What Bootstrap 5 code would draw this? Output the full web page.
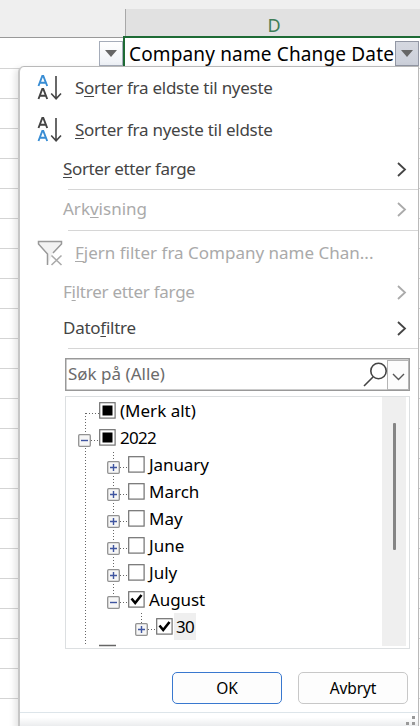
<!DOCTYPE html>
<html lang="no">
<head>
<meta charset="utf-8">
<meta name="viewport" content="width=device-width, initial-scale=1">
<title>Filter</title>
<link href="https://cdn.jsdelivr.net/npm/bootstrap@5.3.0/dist/css/bootstrap.min.css" rel="stylesheet">
<style>
body{width:420px;height:726px;font-family:"Noto Sans","Open Sans",sans-serif;font-size:17px;line-height:1;color:#444;background:#fff}
svg{display:block;flex:none}
.col-strip{height:37px;background:#efefef}
.col-d{width:295px;height:28px;margin-left:125px;padding-left:2px;padding-top:3px;background:#e1e1e1;border-left:1px solid #a8a8a8;color:#3f7d58;font-size:18px}
.title-row{height:31px}
.cell-c{width:123px;border-top:1px solid #999;padding-top:3px}
.cell-d{border:solid #1e6b35;border-width:2px 0 0 2px;margin-top:-1px;padding-left:4px;font-size:19px;color:#000}
.heading-text{letter-spacing:.15px;padding-top:7px}
.drop{width:24px;height:25px;border:1px solid #a5acb9;background:linear-gradient(#fff,#eef1f6)}
.drop-on{background:linear-gradient(#d5d8e0,#ccd0da);border-color:#9297a4;margin-top:3px;margin-right:1px}
.grid-rows{background:repeating-linear-gradient(#d4d4d4 0 1px,#fff 1px 30px)}
.filter-menu{left:18px;top:66px;width:401px;height:680px;background:#fff;border:1px solid #b9b9b9;border-left:2px solid #c6c6c6;border-radius:6px 0 0 0;box-shadow:-3px 2px 6px #0000001c}
.entry{padding-right:11px}
.entry>span,.find>span{padding-bottom:2px}
.h42{height:42px}.h37{height:38px}.h39{height:40px}.h36{height:37px}
.up{padding-bottom:2px}.down{padding-top:2px}
.ico{padding-left:17px}.ico svg{margin-right:12px}
.noico{padding-left:43px}
.off{color:#aaa}
.sep{height:1px;background:#d6d6d6;margin-left:48px}
u{text-underline-offset:2px;text-decoration-thickness:1px}
.find{width:345px;height:33px;margin:9px 0 0 45px;border:1px solid #999;box-shadow:inset 0 0 0 .5px #999;padding-left:2px;color:#6b6b6b}
.find-arrow{width:22px;height:30px;border:1px solid #b5b5b5;background:#fcfcfc;padding:12px 0 0 4px}
.tree{width:345px;height:253px;margin:5px 0 0 45px;border:1px solid #dcdfe1;color:#000;overflow:hidden}
.node{height:27px}
.lv0{padding-left:33px}.lv1{padding-left:12px}.lv2{padding-left:41px}.lv3{padding-left:69px}
.exp{margin-top:5px;margin-right:8px}
.name{margin-left:4px}
.picked{background:#efefef;padding:5px 2px;margin-left:1px}
.wires{left:0;top:0}
.track{right:3px;top:0;width:24px;height:249px;background:#efefef}
.thumb{width:3px;height:127px;margin:26px 0 0 11px;background:#858585;border-radius:1px}
.act{width:110px;height:32px;border-radius:5px;border:1px solid #c8c8c8;background:#fdfdfd;color:#000;font-size:15.5px;line-height:1;padding:2px 0 0}
.act-ok{border:1.5px solid #3978cf;margin-right:16px;letter-spacing:-.2px}
.act-no{letter-spacing:-.15px}
.acts{padding-left:152px;margin-top:23px}
.foot{height:16px;margin-top:8px;border-top:1px solid #dde5ea;background:linear-gradient(#fff 30%,#e6e8ea)}
.t1{letter-spacing:-.1px}.t2{letter-spacing:-.26px}.t3{letter-spacing:-.36px}.t7{letter-spacing:-.7px}
</style>
<script src="https://cdn.jsdelivr.net/npm/bootstrap@5.3.0/dist/js/bootstrap.bundle.min.js"></script>
</head>
<body class="position-relative overflow-hidden d-flex flex-column m-0">
<svg width="0" height="0" class="position-absolute"><defs>
<g id="plus"><rect x=".7" y=".7" width="11.6" height="11.6" rx="1" fill="#f6f6f6" stroke="#929292" stroke-width="1.3"/><path d="M3 6.5h7M6.5 3v7" stroke="#3f55a0" stroke-width="1.4"/></g>
<g id="minus"><rect x=".7" y=".7" width="11.6" height="11.6" rx="1" fill="#f6f6f6" stroke="#929292" stroke-width="1.3"/><path d="M3 6.5h7" stroke="#3f55a0" stroke-width="1.4"/></g>
<g id="box"><rect x=".7" y=".7" width="15.4" height="15.4" fill="#fff" stroke="#707070" stroke-width="1.2"/></g>
<g id="chev"><path d="M2 2 9 8.500l-7 6.500" fill="none" stroke="currentColor" stroke-width="1.8"/></g>
<path id="arr" d="M19 1v23M14.200 18.500l4.900 5.300 4.900-5.300" fill="none" stroke="#444" stroke-width="1.600"/>
<path id="ltr" d="M1.500 11 5.300 1h1L10.200 11M2.800 7.700h6.200" fill="none" stroke-width="1.900"/>
</defs></svg>
<div class="col-strip d-flex align-items-end flex-shrink-0"><div class="col-d d-flex align-items-center justify-content-center">D</div></div>
<div class="title-row d-flex flex-shrink-0">
 <div class="cell-c d-flex justify-content-end"><div class="drop d-flex align-items-center justify-content-center"><svg width="12" height="7"><path d="M0 0h12L6 7z" fill="#666"/></svg></div></div>
 <div class="cell-d d-flex flex-fill justify-content-between"><span class="heading-text text-nowrap">Company name Change Date</span><div class="drop drop-on d-flex flex-shrink-0 align-items-center justify-content-center"><svg width="12" height="7"><path d="M0 0h12L6 7z" fill="#666"/></svg></div></div>
</div>
<div class="grid-rows flex-fill"></div>
<div class="filter-menu position-absolute">
 <div class="entry ico h42 d-flex align-items-center"><svg width="26" height="26"><use href="#ltr" stroke="#398dd4"/><use href="#ltr" y="13" stroke="#444"/><use href="#arr"/></svg><span class="t2">S<u>o</u>rter fra eldste til nyeste</span></div>
 <div class="entry ico h42 d-flex align-items-center"><svg width="26" height="26"><use href="#ltr" stroke="#444"/><use href="#ltr" y="13" stroke="#398dd4"/><use href="#arr"/></svg><span class="t2"><u>S</u>orter fra nyeste til eldste</span></div>
 <div class="entry noico h37 up d-flex align-items-center justify-content-between"><span class="t3"><u>S</u>orter etter farge</span><svg width="11" height="17"><use href="#chev"/></svg></div>
 <div class="sep"></div>
 <div class="entry noico h39 up off d-flex align-items-center justify-content-between"><span>Ark<u>v</u>isning</span><svg width="11" height="17"><use href="#chev"/></svg></div>
 <div class="sep"></div>
 <div class="entry ico h42 down off d-flex align-items-center"><svg width="26" height="26" fill="none"><path d="M10.500 25V14L1.500 4V1.500h23V4L16 13" fill="#f2f2f2" stroke="#999" stroke-width="1.500"/><path d="m14.500 15.500 10 9.500m0-9.500-10 9.500" stroke="#aaa" stroke-width="1.600"/></svg><span><u>F</u>jern filter fra Company name Chan...</span></div>
 <div class="entry noico h37 off d-flex align-items-center justify-content-between"><span class="t2">F<u>i</u>ltrer etter farge</span><svg width="11" height="17"><use href="#chev"/></svg></div>
 <div class="entry noico h36 up d-flex align-items-center justify-content-between"><span class="t2">Dato<u>f</u>iltre</span><svg width="11" height="17"><use href="#chev"/></svg></div>
 <div class="sep"></div>
 <div class="find d-flex align-items-center"><span class="me-auto">Søk på (Alle)</span><svg width="24" height="26" fill="none" stroke="#444" stroke-width="1.600"><circle cx="15.500" cy="9" r="7.700"/><path d="M10 15 1 24"/></svg><div class="find-arrow"><svg width="13" height="8"><path d="m1 1 5.500 5.500L12 1" fill="none" stroke="#555" stroke-width="1.400"/></svg></div></div>
 <div class="tree position-relative">
  <svg class="wires position-absolute" width="340" height="251" fill="none" stroke="#666" stroke-width="1" stroke-dasharray="1 2"><path d="M20 16.500h13M19.500 16v20M19.500 51v198M25 43.500h9M47.500 55v150M54 70.500h9M54 97.500h9M54 124.500h9M54 151.500h9M54 178.500h9M54 205.500h9M75.500 216v10M82 232.500h9"/><path d="M33 248.500h17" stroke-dasharray="none" stroke-width="1.500"/></svg>
  <div class="position-relative">
  <div class="node lv0 d-flex align-items-center"><svg width="17" height="17"><use href="#box"/><path d="M3.500 3.500h10v10h-10z"/></svg><span class="name">(Merk alt)</span></div>
  <div class="node lv1 d-flex align-items-center"><svg class="exp" width="13" height="13"><use href="#minus"/></svg><svg width="17" height="17"><use href="#box"/><path d="M3.500 3.500h10v10h-10z"/></svg><span class="name t7">2022</span></div>
  <div class="node lv2 d-flex align-items-center"><svg class="exp" width="13" height="13"><use href="#plus"/></svg><svg width="17" height="17"><use href="#box"/></svg><span class="name t1">January</span></div>
  <div class="node lv2 d-flex align-items-center"><svg class="exp" width="13" height="13"><use href="#plus"/></svg><svg width="17" height="17"><use href="#box"/></svg><span class="name">March</span></div>
  <div class="node lv2 d-flex align-items-center"><svg class="exp" width="13" height="13"><use href="#plus"/></svg><svg width="17" height="17"><use href="#box"/></svg><span class="name">May</span></div>
  <div class="node lv2 d-flex align-items-center"><svg class="exp" width="13" height="13"><use href="#plus"/></svg><svg width="17" height="17"><use href="#box"/></svg><span class="name">June</span></div>
  <div class="node lv2 d-flex align-items-center"><svg class="exp" width="13" height="13"><use href="#plus"/></svg><svg width="17" height="17"><use href="#box"/></svg><span class="name">July</span></div>
  <div class="node lv2 d-flex align-items-center"><svg class="exp" width="13" height="13"><use href="#minus"/></svg><svg width="17" height="17"><use href="#box"/><path d="m3.500 7.500 3.700 4.500L13.500 4" fill="none" stroke="#000" stroke-width="2.600"/></svg><span class="name t1">August</span></div>
  <div class="node lv3 d-flex align-items-center"><svg class="exp" width="13" height="13"><use href="#plus"/></svg><svg width="17" height="17"><use href="#box"/><path d="m3.500 7.500 3.700 4.500L13.500 4" fill="none" stroke="#000" stroke-width="2.600"/></svg><span class="picked t7">30</span></div>
  </div>
  <div class="track position-absolute"><div class="thumb"></div></div>
 </div>
 <div class="acts d-flex"><button class="btn act act-ok">OK</button><button class="btn act act-no">Avbryt</button></div>
 <div class="foot d-flex justify-content-end"><svg width="16" height="14" fill="#999"><path d="M10 3h3v3h-3zM10 9h3v3h-3zM4 9h3v3H4z"/></svg></div>
</div>
</body>
</html>
